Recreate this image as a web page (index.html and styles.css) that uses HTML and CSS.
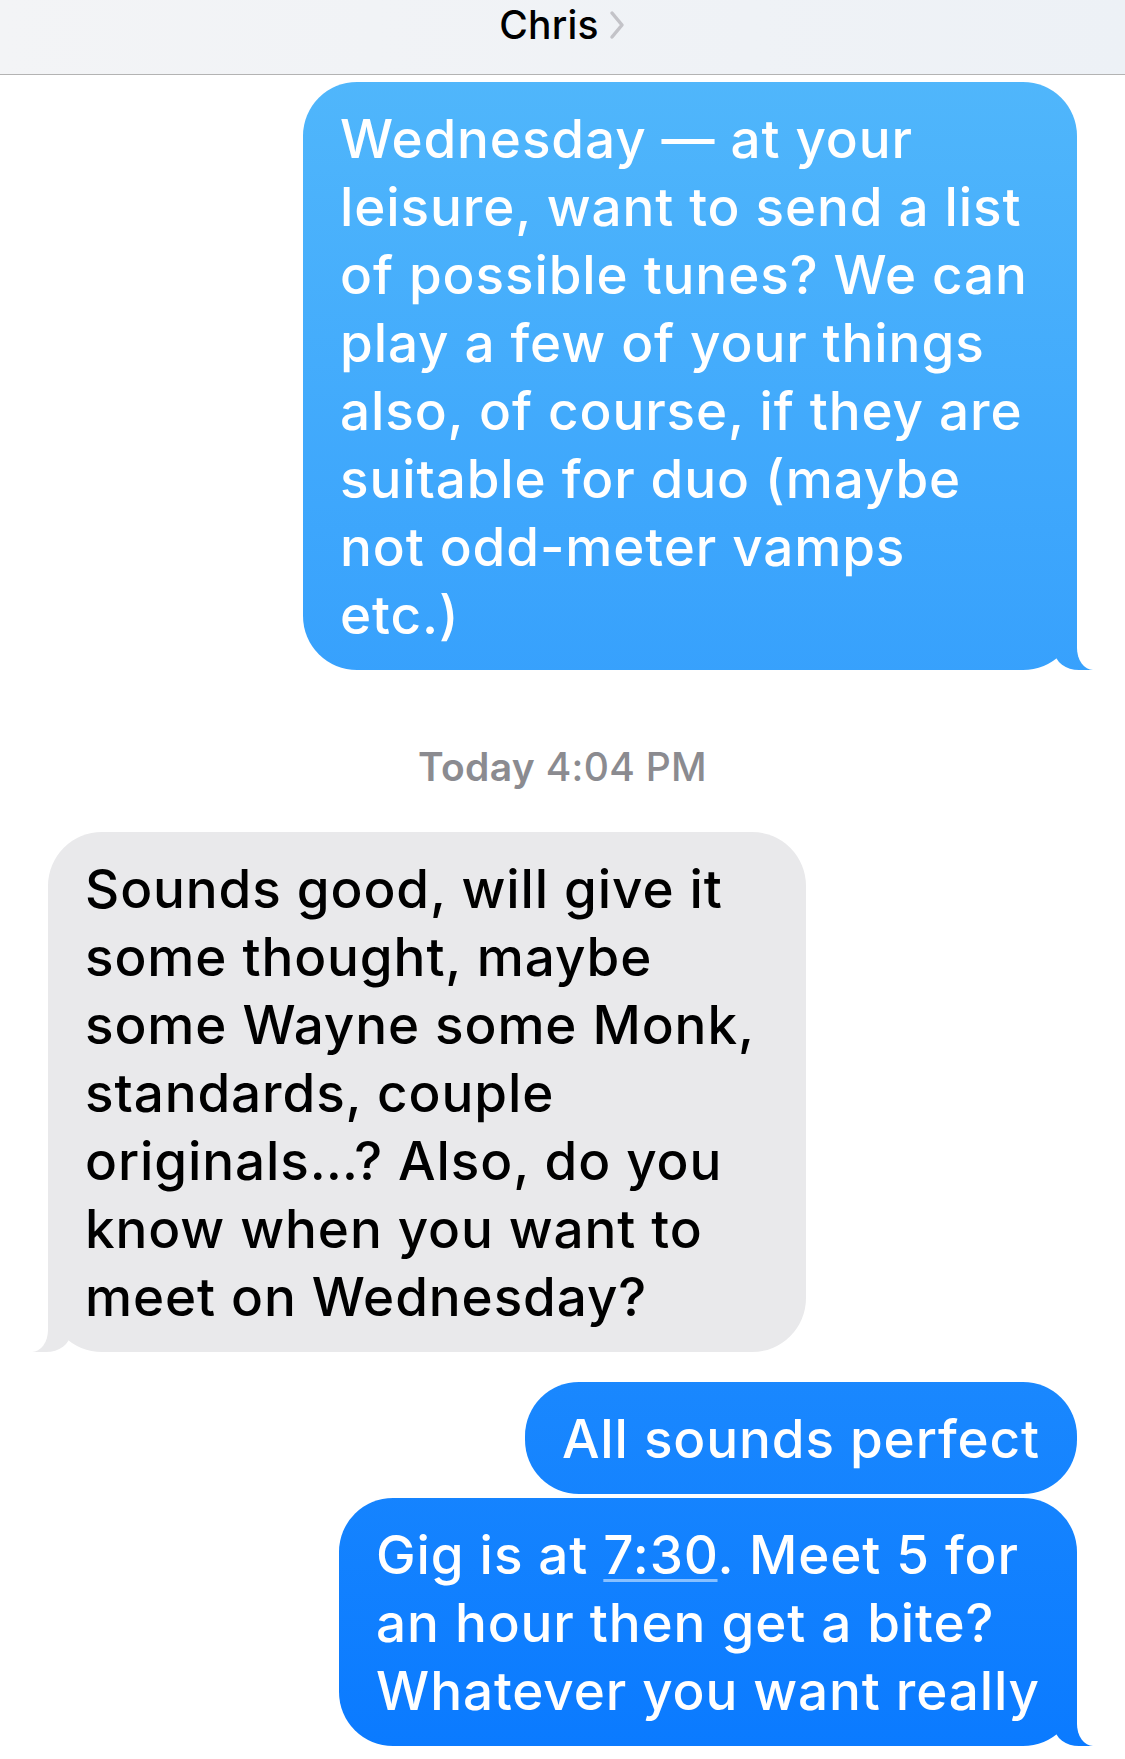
FILE: index.html
```html
<!DOCTYPE html>
<html lang="en">

<head>
    <meta charset="UTF-8" />
    <meta name="viewport" content="width=device-width, initial-scale=1.0" />
    <title>Chris - Messages</title>
    <link rel="stylesheet" href="styles.css">
</head>

<body>
    <header class="topbar">
        <span class="contact-name">Chris</span>
        <svg class="chevron" width="18" height="30" viewBox="0 0 18 30" aria-hidden="true">
            <polyline points="4,3 14,15 4,27" fill="none" stroke="#c3c3c8" stroke-width="3.5" stroke-linecap="round" stroke-linejoin="round" />
        </svg>
    </header>

    <main class="thread">
        <div class="msg sent wide tail">
            Wednesday — at your<br>leisure, want to send a list<br>of possible tunes? We can<br>play a few of your things<br>also, of course, if they are<br>suitable for duo (maybe<br>not odd-meter vamps<br>etc.)
        </div>

        <div class="stamp"><b>Today</b> 4:04 PM</div>

        <div class="msg received wide tail">
            Sounds good, will give it<br>some thought, maybe<br>some Wayne some Monk,<br>standards, couple<br>originals…? Also, do you<br>know when you want to<br>meet on Wednesday?
        </div>

        <div class="msg sent grouped">All sounds perfect</div>

        <div class="msg sent tail">
            Gig is at <span class="time-link">7:30</span>. Meet 5 for<br>an hour then get a bite?<br>Whatever you want really
        </div>
    </main>
</body>

</html>
```

FILE: styles.css
```css
body {
    margin: 0;
    padding: 0;
    background: #fff;
    font-family: 'Inter', 'Liberation Sans', sans-serif;
    color: #000;
    min-height: 100vh;
}

.topbar {
    height: 75px;
    border-bottom: 1px solid #b3b3b3;
    background: linear-gradient(90deg, #f3f4f6, #edf1f6);
    display: flex;
    justify-content: center;
    align-items: flex-start;
    gap: 9px;
    padding-top: 2px;
    box-sizing: border-box;
}

.contact-name {
    font-size: 39px;
    line-height: 46px;
    font-weight: 500;
    letter-spacing: 0.2px;
}

.chevron {
    margin-top: 8px;
}

.thread {
    display: flex;
    flex-direction: column;
    padding: 7px 48px 0;
}

.msg {
    position: relative;
    box-sizing: border-box;
    font-size: 53px;
    line-height: 68px;
    font-weight: 500;
    letter-spacing: 0.9px;
    padding: 23px 37px 21px;
    border-radius: 54px;
    width: fit-content;
}

.sent {
    align-self: flex-end;
    color: #fff;
    background: linear-gradient(180deg, #53b9fb 0%, #0a7aff 100%) fixed;
}

.received {
    align-self: flex-start;
    background: #e9e9eb;
}

.wide.sent {
    width: 774px;
}

.wide.received {
    width: 758px;
}

.grouped {
    margin-top: 30px;
    margin-bottom: 4px;
}

/* bubble tails */
.tail::before,
.tail::after {
    content: "";
    position: absolute;
    bottom: 0;
    height: 54px;
}

.sent.tail::before {
    right: -16px;
    width: 38px;
    background: inherit;
    border-bottom-left-radius: 24px 18px;
}

.sent.tail::after {
    right: -40px;
    width: 40px;
    background: #fff;
    border-bottom-left-radius: 16px 22px;
}

.received.tail::before {
    left: -16px;
    width: 38px;
    background: #e9e9eb;
    border-bottom-right-radius: 24px 18px;
}

.received.tail::after {
    left: -40px;
    width: 40px;
    background: #fff;
    border-bottom-right-radius: 16px 22px;
}

.stamp {
    align-self: center;
    margin: 75px 0 43px;
    font-size: 39px;
    line-height: 44px;
    color: #8b8b90;
    font-weight: 500;
    letter-spacing: 0.3px;
}

.stamp b {
    font-weight: 600;
}

.time-link {
    text-decoration: underline;
    text-decoration-color: rgba(255, 255, 255, 0.5);
    text-decoration-thickness: 3px;
    text-underline-offset: 5px;
}
```
